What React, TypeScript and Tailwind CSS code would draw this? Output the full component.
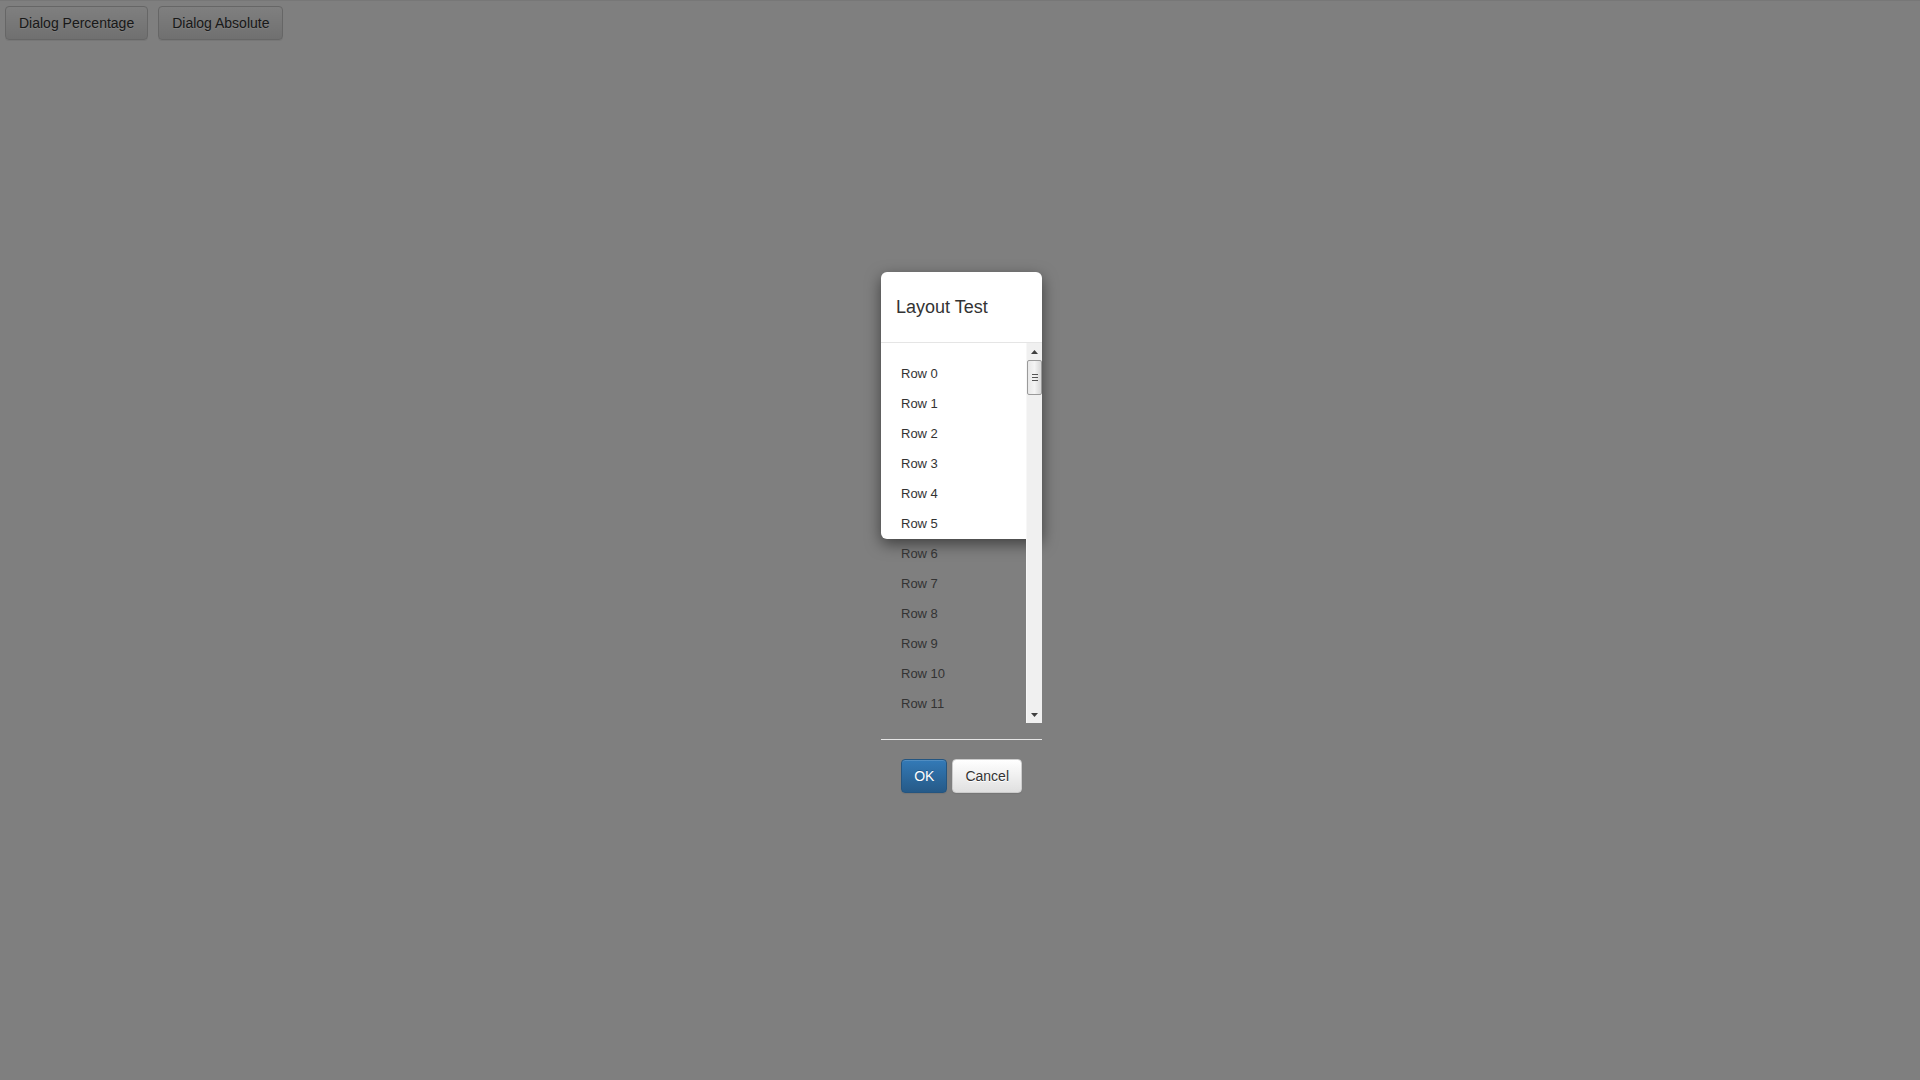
import React from "react";

const btnDefault =
  "h-[34px] px-[12px] border border-[#ccc] rounded-[4px] text-[14px] text-[#333] bg-gradient-to-b from-white to-[#e0e0e0] shadow-[inset_0_1px_0_rgba(255,255,255,0.15),0_1px_1px_rgba(0,0,0,0.075)] [text-shadow:0_1px_0_#fff] leading-[20px]";

function Scrollbar() {
  return (
    <div className="w-[16px] h-[380px] bg-[#f0f0f0] flex flex-col shrink-0 border-l border-[#f7f7f7]">
      <div className="h-[17px] flex items-center justify-center">
        <svg width="7" height="4" viewBox="0 0 7 4">
          <polygon points="3.5,0 7,4 0,4" fill="#404040" />
        </svg>
      </div>
      <div className="h-[35px] rounded-[2px] border border-[#9a9a9a] bg-gradient-to-r from-[#e8e8e8] via-[#f4f4f4] to-[#d8d8d8] flex flex-col items-center justify-center gap-[2px]">
        <div className="w-[6px] h-[1px] bg-[#555]" />
        <div className="w-[6px] h-[1px] bg-[#555]" />
        <div className="w-[6px] h-[1px] bg-[#555]" />
      </div>
      <div className="flex-1" />
      <div className="h-[17px] flex items-center justify-center">
        <svg width="7" height="4" viewBox="0 0 7 4">
          <polygon points="0,0 7,0 3.5,4" fill="#404040" />
        </svg>
      </div>
    </div>
  );
}

export default function App() {
  const rows = Array.from({ length: 12 }, (_, i) => `Row ${i}`);
  return (
    <div
      className="relative w-[1920px] h-[1080px] bg-white overflow-hidden border-t border-[#777]"
      style={{ fontFamily: '"Liberation Sans", Arial, sans-serif' }}
    >
      <div className="flex gap-[10px] pl-[5px] pt-[5px]">
        <button className={btnDefault + " px-[13px]"}>Dialog Percentage</button>
        <button className={btnDefault + " px-[13px]"}>Dialog Absolute</button>
      </div>

      <div className="absolute inset-0 bg-black/50" />

      <div className="absolute left-[881px] top-[271px] w-[161px] h-[267px] bg-white rounded-[6px] shadow-[0_5px_15px_rgba(0,0,0,0.5)]">
        <div className="h-[71px] border-b border-[#e5e5e5] flex items-center pl-[15px]">
          <h4 className="text-[18px] text-[#333] leading-[26px]">Layout Test</h4>
        </div>
        <div className="flex h-[380px]">
          <div className="flex-1 overflow-hidden pt-[16px]">
            {rows.map((r) => (
              <div key={r} className="h-[30px] leading-[30px] pl-[20px] text-[13px] text-[#333]">
                {r}
              </div>
            ))}
          </div>
          <Scrollbar />
        </div>
        <div className="mt-[16px] border-t border-[#e5e5e5] pt-[19px] px-[20px] flex justify-end gap-[5px]">
          <button className="h-[34px] px-[12px] rounded-[4px] border border-[#245580] text-[14px] text-white bg-gradient-to-b from-[#337ab7] to-[#265a88] [text-shadow:0_-1px_0_rgba(0,0,0,0.2)] shadow-[inset_0_1px_0_rgba(255,255,255,0.15),0_1px_1px_rgba(0,0,0,0.075)]">
            OK
          </button>
          <button className={btnDefault}>Cancel</button>
        </div>
      </div>
    </div>
  );
}
